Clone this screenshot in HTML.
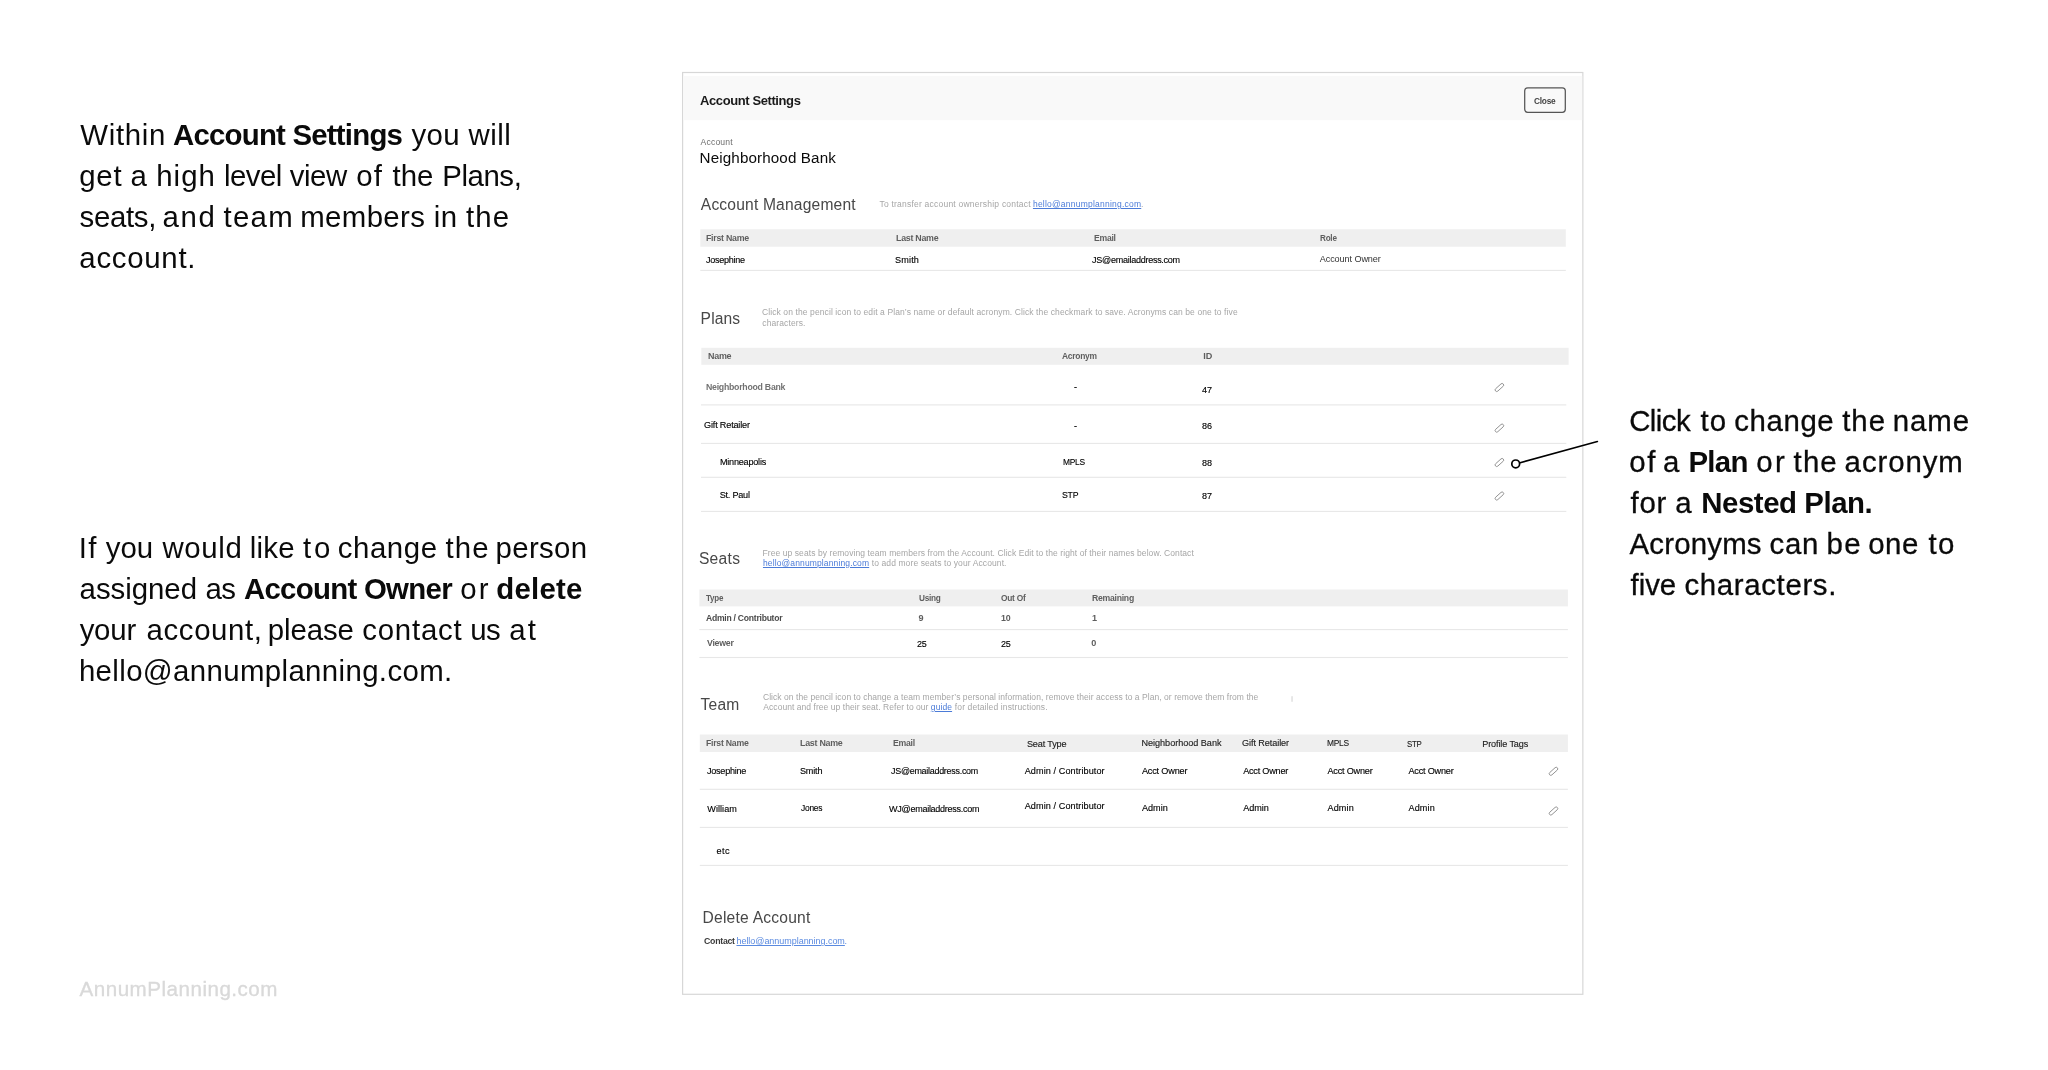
<!DOCTYPE html>
<html lang="en"><head><meta charset="utf-8">
<title>Account Settings</title>
<style>
html,body{margin:0;padding:0;background:#fff;}
body{width:2048px;height:1070px;position:relative;overflow:hidden;font-family:"Liberation Sans", sans-serif;}
.t{position:absolute;white-space:nowrap;line-height:1;transform-origin:0 50%;}
.t b{font-weight:700;}
.t a{color:#4b7bd8;text-decoration:underline;}
.t a.l2{color:#5a8ae0;}
svg{position:absolute;left:0;top:0;overflow:visible;}
#root{position:absolute;left:0;top:0;width:2048px;height:1070px;will-change:transform;}

</style></head><body><div id="root">
<svg width="2048" height="1070" viewBox="0 0 2048 1070"><rect x="682.6" y="72.5" width="900.25" height="921.8" fill="#fff" stroke="#d7d7d7" stroke-width="1.2"/><rect x="683.2" y="76" width="899" height="44.2" fill="#f9f9f9"/><rect x="1524.7" y="87.85" width="40.6" height="24.45" rx="3" ry="3" fill="none" stroke="#555" stroke-width="1.25"/><rect x="700.3" y="229.25" width="865.50" height="17.50" fill="#efefef"/><rect x="701.3" y="347.8" width="867.30" height="17.00" fill="#efefef"/><rect x="699.4" y="589.5" width="868.50" height="16.90" fill="#efefef"/><rect x="699.8" y="734.5" width="868.10" height="17.50" fill="#efefef"/><rect x="700.3" y="269.85" width="865.50" height="1.1" fill="#e7e7e7"/><rect x="701.0" y="404.35" width="865.30" height="1.1" fill="#e7e7e7"/><rect x="701.0" y="442.85" width="865.30" height="1.1" fill="#e7e7e7"/><rect x="701.0" y="476.75" width="865.30" height="1.1" fill="#e7e7e7"/><rect x="701.0" y="510.85" width="865.30" height="1.1" fill="#e7e7e7"/><rect x="699.4" y="629.05" width="868.50" height="1.1" fill="#e7e7e7"/><rect x="699.4" y="656.95" width="868.50" height="1.1" fill="#e7e7e7"/><rect x="699.8" y="788.75" width="868.10" height="1.1" fill="#e7e7e7"/><rect x="699.8" y="826.85" width="868.10" height="1.1" fill="#e7e7e7"/><rect x="699.8" y="864.85" width="868.10" height="1.1" fill="#e7e7e7"/><rect x="1494.20" y="385.90" width="10.4" height="3.2" rx="1.6" ry="1.6" fill="none" stroke="#8e8e8e" stroke-width="0.9" transform="rotate(-42 1499.40 387.50)"/><rect x="1494.20" y="426.50" width="10.4" height="3.2" rx="1.6" ry="1.6" fill="none" stroke="#8e8e8e" stroke-width="0.9" transform="rotate(-42 1499.40 428.10)"/><rect x="1494.20" y="460.90" width="10.4" height="3.2" rx="1.6" ry="1.6" fill="none" stroke="#8e8e8e" stroke-width="0.9" transform="rotate(-42 1499.40 462.50)"/><rect x="1494.20" y="494.40" width="10.4" height="3.2" rx="1.6" ry="1.6" fill="none" stroke="#8e8e8e" stroke-width="0.9" transform="rotate(-42 1499.40 496.00)"/><rect x="1548.30" y="769.70" width="10.4" height="3.2" rx="1.6" ry="1.6" fill="none" stroke="#8e8e8e" stroke-width="0.9" transform="rotate(-42 1553.50 771.30)"/><rect x="1548.30" y="809.40" width="10.4" height="3.2" rx="1.6" ry="1.6" fill="none" stroke="#8e8e8e" stroke-width="0.9" transform="rotate(-42 1553.50 811.00)"/><line x1="1519.2" y1="463.0" x2="1597.4" y2="441.5" stroke="#000" stroke-width="1.6" stroke-linecap="round"/><circle cx="1515.7" cy="463.9" r="3.9" fill="#fff" stroke="#000" stroke-width="1.7"/><rect x="1291.2" y="696" width="1.7" height="6" rx="0.8" fill="#e4e4e4"/></svg>
<div class="t" id="t0" style="left:80.23px;top:120px;font-size:29.4px;color:#0a0a0a;letter-spacing:0.701px;">Within</div>
<div class="t" id="t1" style="left:172.98px;top:120px;font-size:29.4px;color:#0a0a0a;font-weight:700;letter-spacing:-0.782px;">Account Settings</div>
<div class="t" id="t2" style="left:411.42px;top:120px;font-size:29.4px;color:#0a0a0a;letter-spacing:0.412px;">you will</div>
<div class="t" id="t3" style="left:79.34px;top:161px;font-size:29.4px;color:#0a0a0a;letter-spacing:0.693px;">get</div>
<div class="t" id="t4" style="left:130.49px;top:161px;font-size:29.4px;color:#0a0a0a;">a</div>
<div class="t" id="t5" style="left:156.24px;top:161px;font-size:29.4px;color:#0a0a0a;letter-spacing:1.031px;">high</div>
<div class="t" id="t6" style="left:223.89px;top:161px;font-size:29.4px;color:#0a0a0a;letter-spacing:-0.509px;">level</div>
<div class="t" id="t7" style="left:289.77px;top:161px;font-size:29.4px;color:#0a0a0a;letter-spacing:-0.455px;">view</div>
<div class="t" id="t8" style="left:356.34px;top:161px;font-size:29.4px;color:#0a0a0a;letter-spacing:1.107px;">of</div>
<div class="t" id="t9" style="left:392.57px;top:161px;font-size:29.4px;color:#0a0a0a;letter-spacing:-0.045px;">the</div>
<div class="t" id="t10" style="left:442.31px;top:161px;font-size:29.4px;color:#0a0a0a;letter-spacing:-0.438px;">Plans,</div>
<div class="t" id="t11" style="left:79.62px;top:202px;font-size:29.4px;color:#0a0a0a;letter-spacing:-0.337px;">seats,</div>
<div class="t" id="t12" style="left:162.52px;top:202px;font-size:29.4px;color:#0a0a0a;letter-spacing:1.596px;">and</div>
<div class="t" id="t13" style="left:223.52px;top:202px;font-size:29.4px;color:#0a0a0a;letter-spacing:1.251px;">team</div>
<div class="t" id="t14" style="left:300.24px;top:202px;font-size:29.4px;color:#0a0a0a;letter-spacing:0.370px;">members</div>
<div class="t" id="t15" style="left:433.79px;top:202px;font-size:29.4px;color:#0a0a0a;letter-spacing:0.555px;">in</div>
<div class="t" id="t16" style="left:466.06px;top:202px;font-size:29.4px;color:#0a0a0a;letter-spacing:1.056px;">the</div>
<div class="t" id="t17" style="left:79.34px;top:243px;font-size:29.4px;color:#0a0a0a;letter-spacing:0.718px;">account.</div>
<div class="t" id="t18" style="left:78.69px;top:533px;font-size:29.4px;color:#0a0a0a;letter-spacing:1.356px;">If</div>
<div class="t" id="t19" style="left:105.70px;top:533px;font-size:29.4px;color:#0a0a0a;letter-spacing:0.070px;">you</div>
<div class="t" id="t20" style="left:162.45px;top:533px;font-size:29.4px;color:#0a0a0a;letter-spacing:0.649px;">would</div>
<div class="t" id="t21" style="left:249.78px;top:533px;font-size:29.4px;color:#0a0a0a;letter-spacing:0.252px;">like</div>
<div class="t" id="t22" style="left:303.04px;top:533px;font-size:29.4px;color:#0a0a0a;letter-spacing:2.753px;">to</div>
<div class="t" id="t23" style="left:337.65px;top:533px;font-size:29.4px;color:#0a0a0a;letter-spacing:0.608px;">change</div>
<div class="t" id="t24" style="left:445.58px;top:533px;font-size:29.4px;color:#0a0a0a;letter-spacing:1.125px;">the</div>
<div class="t" id="t25" style="left:495.51px;top:533px;font-size:29.4px;color:#0a0a0a;letter-spacing:0.362px;">person</div>
<div class="t" id="t26" style="left:79.59px;top:574px;font-size:29.4px;color:#0a0a0a;letter-spacing:-0.036px;">assigned</div>
<div class="t" id="t27" style="left:205.59px;top:574px;font-size:29.4px;color:#0a0a0a;letter-spacing:-0.780px;">as</div>
<div class="t" id="t28" style="left:243.89px;top:574px;font-size:29.4px;color:#0a0a0a;font-weight:700;letter-spacing:-0.705px;">Account Owner</div>
<div class="t" id="t29" style="left:460.34px;top:574px;font-size:29.4px;color:#0a0a0a;letter-spacing:2.044px;">or</div>
<div class="t" id="t30" style="left:496.35px;top:574px;font-size:29.4px;color:#0a0a0a;font-weight:700;letter-spacing:0.214px;">delete</div>
<div class="t" id="t31" style="left:79.64px;top:615px;font-size:29.4px;color:#0a0a0a;letter-spacing:-0.196px;">your</div>
<div class="t" id="t32" style="left:146.61px;top:615px;font-size:29.4px;color:#0a0a0a;letter-spacing:0.598px;">account,</div>
<div class="t" id="t33" style="left:267.83px;top:615px;font-size:29.4px;color:#0a0a0a;letter-spacing:-0.108px;">please</div>
<div class="t" id="t34" style="left:362.34px;top:615px;font-size:29.4px;color:#0a0a0a;letter-spacing:0.749px;">contact</div>
<div class="t" id="t35" style="left:470.21px;top:615px;font-size:29.4px;color:#0a0a0a;letter-spacing:-0.603px;">us</div>
<div class="t" id="t36" style="left:509.13px;top:615px;font-size:29.4px;color:#0a0a0a;letter-spacing:2.241px;">at</div>
<div class="t" id="t37" style="left:78.91px;top:656px;font-size:29.4px;color:#0a0a0a;letter-spacing:0.370px;">hello@annumplanning.com.</div>
<div class="t" id="t38" style="left:1629.16px;top:406px;font-size:29.4px;color:#0a0a0a;-webkit-text-stroke:0.3px #0a0a0a;letter-spacing:-0.544px;">Click</div>
<div class="t" id="t39" style="left:1700.57px;top:406px;font-size:29.4px;color:#0a0a0a;-webkit-text-stroke:0.3px #0a0a0a;letter-spacing:0.976px;">to</div>
<div class="t" id="t40" style="left:1734.30px;top:406px;font-size:29.4px;color:#0a0a0a;-webkit-text-stroke:0.3px #0a0a0a;letter-spacing:0.589px;">change</div>
<div class="t" id="t41" style="left:1842.15px;top:406px;font-size:29.4px;color:#0a0a0a;-webkit-text-stroke:0.3px #0a0a0a;letter-spacing:0.999px;">the</div>
<div class="t" id="t42" style="left:1892.72px;top:406px;font-size:29.4px;color:#0a0a0a;-webkit-text-stroke:0.3px #0a0a0a;letter-spacing:0.969px;">name</div>
<div class="t" id="t43" style="left:1629.16px;top:447px;font-size:29.4px;color:#0a0a0a;-webkit-text-stroke:0.3px #0a0a0a;letter-spacing:1.749px;">of</div>
<div class="t" id="t44" style="left:1662.94px;top:447px;font-size:29.4px;color:#0a0a0a;-webkit-text-stroke:0.3px #0a0a0a;">a</div>
<div class="t" id="t45" style="left:1688.45px;top:447px;font-size:29.4px;color:#0a0a0a;font-weight:700;letter-spacing:-0.708px;">Plan</div>
<div class="t" id="t46" style="left:1756.30px;top:447px;font-size:29.4px;color:#0a0a0a;-webkit-text-stroke:0.3px #0a0a0a;letter-spacing:2.468px;">or</div>
<div class="t" id="t47" style="left:1793.62px;top:447px;font-size:29.4px;color:#0a0a0a;-webkit-text-stroke:0.3px #0a0a0a;letter-spacing:1.121px;">the</div>
<div class="t" id="t48" style="left:1844.61px;top:447px;font-size:29.4px;color:#0a0a0a;-webkit-text-stroke:0.3px #0a0a0a;letter-spacing:0.925px;">acronym</div>
<div class="t" id="t49" style="left:1630.58px;top:488px;font-size:29.4px;color:#0a0a0a;-webkit-text-stroke:0.3px #0a0a0a;letter-spacing:0.763px;">for</div>
<div class="t" id="t50" style="left:1675.24px;top:488px;font-size:29.4px;color:#0a0a0a;-webkit-text-stroke:0.3px #0a0a0a;">a</div>
<div class="t" id="t51" style="left:1701.23px;top:488px;font-size:29.4px;color:#0a0a0a;font-weight:700;letter-spacing:-0.446px;">Nested Plan.</div>
<div class="t" id="t52" style="left:1629.55px;top:529px;font-size:29.4px;color:#0a0a0a;-webkit-text-stroke:0.3px #0a0a0a;letter-spacing:0.194px;">Acronyms</div>
<div class="t" id="t53" style="left:1769.61px;top:529px;font-size:29.4px;color:#0a0a0a;-webkit-text-stroke:0.3px #0a0a0a;letter-spacing:0.643px;">can</div>
<div class="t" id="t54" style="left:1826.50px;top:529px;font-size:29.4px;color:#0a0a0a;-webkit-text-stroke:0.3px #0a0a0a;letter-spacing:1.411px;">be</div>
<div class="t" id="t55" style="left:1868.26px;top:529px;font-size:29.4px;color:#0a0a0a;-webkit-text-stroke:0.3px #0a0a0a;letter-spacing:0.527px;">one</div>
<div class="t" id="t56" style="left:1928.57px;top:529px;font-size:29.4px;color:#0a0a0a;-webkit-text-stroke:0.3px #0a0a0a;letter-spacing:1.244px;">to</div>
<div class="t" id="t57" style="left:1630.58px;top:570px;font-size:29.4px;color:#0a0a0a;-webkit-text-stroke:0.3px #0a0a0a;letter-spacing:-0.033px;">five</div>
<div class="t" id="t58" style="left:1684.47px;top:570px;font-size:29.4px;color:#0a0a0a;-webkit-text-stroke:0.3px #0a0a0a;letter-spacing:0.651px;">characters.</div>
<div class="t" id="t59" style="left:79.56px;top:979px;font-size:20.6px;color:#d9d9d9;-webkit-text-stroke:0.35px #d9d9d9;letter-spacing:0.493px;">AnnumPlanning.com</div>
<div class="t" id="t60" style="left:700.27px;top:94px;font-size:13.2px;color:#1a1a1a;font-weight:700;letter-spacing:-0.396px;transform:scaleX(0.9839);">Account Settings</div>
<div class="t" id="t61" style="left:1534.38px;top:97px;font-size:9.0px;color:#444;font-weight:700;letter-spacing:-0.270px;transform:scaleX(0.9253);">Close</div>
<div class="t" id="t62" style="left:700.51px;top:138px;font-size:8.6px;color:#6e6e6e;letter-spacing:0.191px;">Account</div>
<div class="t" id="t63" style="left:699.58px;top:150px;font-size:15.2px;color:#0a0a0a;letter-spacing:0.125px;">Neighborhood Bank</div>
<div class="t" id="t64" style="left:700.81px;top:197px;font-size:15.6px;color:#484848;letter-spacing:0.184px;">Account Management</div>
<div class="t" id="t65" style="left:879.41px;top:200px;font-size:8.5px;color:#a6a6a6;letter-spacing:0.224px;">To transfer account ownership contact</div>
<div class="t" id="t66" style="left:1032.94px;top:200px;font-size:8.5px;color:#a6a6a6;letter-spacing:0.224px;"><a>hello@annumplanning.com</a></div>
<div class="t" id="t67" style="left:1141.00px;top:200px;font-size:8.5px;color:#a6a6a6;">.</div>
<div class="t" id="t68" style="left:706.41px;top:234px;font-size:9.1px;color:#5e5e5e;font-weight:700;letter-spacing:-0.273px;transform:scaleX(0.9683);">First Name</div>
<div class="t" id="t69" style="left:896.05px;top:234px;font-size:9.1px;color:#5e5e5e;font-weight:700;letter-spacing:-0.273px;transform:scaleX(0.9729);">Last Name</div>
<div class="t" id="t70" style="left:1093.55px;top:234px;font-size:9.1px;color:#5e5e5e;font-weight:700;letter-spacing:-0.273px;transform:scaleX(0.9493);">Email</div>
<div class="t" id="t71" style="left:1319.59px;top:234px;font-size:9.1px;color:#5e5e5e;font-weight:700;letter-spacing:-0.273px;transform:scaleX(0.8952);">Role</div>
<div class="t" id="t72" style="left:706.41px;top:256px;font-size:9.1px;color:#000;-webkit-text-stroke:0.13px #000;letter-spacing:-0.273px;transform:scaleX(0.9948);">Josephine</div>
<div class="t" id="t73" style="left:895.08px;top:256px;font-size:9.1px;color:#000;-webkit-text-stroke:0.13px #000;letter-spacing:0.152px;">Smith</div>
<div class="t" id="t74" style="left:1091.59px;top:256px;font-size:9.1px;color:#000;-webkit-text-stroke:0.13px #000;letter-spacing:-0.273px;transform:scaleX(0.9934);">JS@emailaddress.com</div>
<div class="t" id="t75" style="left:1319.73px;top:255px;font-size:9.1px;color:#333;letter-spacing:-0.088px;">Account Owner</div>
<div class="t" id="t76" style="left:700.60px;top:311px;font-size:15.6px;color:#484848;letter-spacing:0.141px;">Plans</div>
<div class="t" id="t77" style="left:761.97px;top:308px;font-size:8.5px;color:#a6a6a6;letter-spacing:0.101px;">Click on the pencil icon to edit a Plan’s name or default acronym. Click the checkmark to save. Acronyms can be one to five</div>
<div class="t" id="t78" style="left:762.34px;top:319px;font-size:8.5px;color:#a6a6a6;letter-spacing:0.103px;">characters.</div>
<div class="t" id="t79" style="left:707.55px;top:352px;font-size:9.1px;color:#5e5e5e;font-weight:700;letter-spacing:-0.273px;transform:scaleX(0.9853);">Name</div>
<div class="t" id="t80" style="left:1062.41px;top:352px;font-size:9.1px;color:#5e5e5e;font-weight:700;letter-spacing:-0.273px;transform:scaleX(0.9283);">Acronym</div>
<div class="t" id="t81" style="left:1203.26px;top:352px;font-size:9.1px;color:#5e5e5e;font-weight:700;letter-spacing:-0.057px;">ID</div>
<div class="t" id="t82" style="left:706.23px;top:383px;font-size:9.1px;color:#727272;font-weight:700;letter-spacing:-0.273px;transform:scaleX(0.9631);">Neighborhood Bank</div>
<div class="t" id="t83" style="left:1074.02px;top:383px;font-size:9.1px;color:#000;-webkit-text-stroke:0.13px #000;">-</div>
<div class="t" id="t84" style="left:1201.59px;top:386px;font-size:9.1px;color:#000;-webkit-text-stroke:0.13px #000;letter-spacing:-0.087px;transform:scaleX(0.9960);">47</div>
<div class="t" id="t85" style="left:704.11px;top:421px;font-size:9.1px;color:#000;-webkit-text-stroke:0.13px #000;letter-spacing:-0.183px;">Gift Retailer</div>
<div class="t" id="t86" style="left:1074.02px;top:422px;font-size:9.1px;color:#000;-webkit-text-stroke:0.13px #000;">-</div>
<div class="t" id="t87" style="left:1201.76px;top:422px;font-size:9.1px;color:#000;-webkit-text-stroke:0.13px #000;letter-spacing:-0.094px;transform:scaleX(0.9949);">86</div>
<div class="t" id="t88" style="left:719.95px;top:458px;font-size:9.1px;color:#000;-webkit-text-stroke:0.13px #000;letter-spacing:-0.221px;">Minneapolis</div>
<div class="t" id="t89" style="left:1063.40px;top:458px;font-size:9.1px;color:#000;-webkit-text-stroke:0.13px #000;letter-spacing:-0.273px;transform:scaleX(0.9236);">MPLS</div>
<div class="t" id="t90" style="left:1201.76px;top:459px;font-size:9.1px;color:#000;-webkit-text-stroke:0.13px #000;letter-spacing:-0.094px;transform:scaleX(0.9949);">88</div>
<div class="t" id="t91" style="left:719.64px;top:491px;font-size:9.1px;color:#000;-webkit-text-stroke:0.13px #000;letter-spacing:-0.212px;">St. Paul</div>
<div class="t" id="t92" style="left:1062.42px;top:491px;font-size:9.1px;color:#000;-webkit-text-stroke:0.13px #000;letter-spacing:-0.273px;transform:scaleX(0.9595);">STP</div>
<div class="t" id="t93" style="left:1201.76px;top:492px;font-size:9.1px;color:#000;-webkit-text-stroke:0.13px #000;letter-spacing:-0.123px;transform:scaleX(0.9947);">87</div>
<div class="t" id="t94" style="left:698.92px;top:551px;font-size:15.6px;color:#484848;letter-spacing:0.290px;">Seats</div>
<div class="t" id="t95" style="left:762.49px;top:549px;font-size:8.5px;color:#a6a6a6;letter-spacing:0.078px;">Free up seats by removing team members from the Account. Click Edit to the right of their names below. Contact</div>
<div class="t" id="t96" style="left:762.96px;top:559px;font-size:8.5px;color:#a6a6a6;letter-spacing:0.133px;"><a>hello@annumplanning.com</a></div>
<div class="t" id="t97" style="left:871.71px;top:559px;font-size:8.5px;color:#a6a6a6;letter-spacing:0.104px;">to add more seats to your Account.</div>
<div class="t" id="t98" style="left:706.05px;top:594px;font-size:9.1px;color:#5e5e5e;font-weight:700;letter-spacing:-0.273px;transform:scaleX(0.8788);">Type</div>
<div class="t" id="t99" style="left:918.87px;top:594px;font-size:9.1px;color:#5e5e5e;font-weight:700;letter-spacing:-0.273px;transform:scaleX(0.9065);">Using</div>
<div class="t" id="t100" style="left:1001.23px;top:594px;font-size:9.1px;color:#5e5e5e;font-weight:700;letter-spacing:-0.273px;transform:scaleX(0.9197);">Out Of</div>
<div class="t" id="t101" style="left:1091.73px;top:594px;font-size:9.1px;color:#5e5e5e;font-weight:700;letter-spacing:-0.273px;transform:scaleX(0.9521);">Remaining</div>
<div class="t" id="t102" style="left:705.73px;top:614px;font-size:9.1px;color:#4a4a4a;font-weight:700;letter-spacing:-0.273px;transform:scaleX(0.9458);">Admin / Contributor</div>
<div class="t" id="t103" style="left:918.42px;top:614px;font-size:9.1px;color:#5e5e5e;font-weight:700;">9</div>
<div class="t" id="t104" style="left:1001.23px;top:614px;font-size:9.1px;color:#5e5e5e;font-weight:700;letter-spacing:-0.273px;transform:scaleX(0.9695);">10</div>
<div class="t" id="t105" style="left:1092.07px;top:614px;font-size:9.1px;color:#5e5e5e;font-weight:700;">1</div>
<div class="t" id="t106" style="left:706.72px;top:639px;font-size:9.1px;color:#5e5e5e;font-weight:700;letter-spacing:-0.273px;transform:scaleX(0.9651);">Viewer</div>
<div class="t" id="t107" style="left:917.42px;top:640px;font-size:9.1px;color:#000;-webkit-text-stroke:0.13px #000;letter-spacing:-0.271px;transform:scaleX(0.9890);">25</div>
<div class="t" id="t108" style="left:1000.90px;top:640px;font-size:9.1px;color:#000;-webkit-text-stroke:0.13px #000;letter-spacing:-0.208px;transform:scaleX(0.9924);">25</div>
<div class="t" id="t109" style="left:1091.35px;top:639px;font-size:9.1px;color:#5e5e5e;font-weight:700;">0</div>
<div class="t" id="t110" style="left:700.49px;top:697px;font-size:15.6px;color:#484848;letter-spacing:0.235px;">Team</div>
<div class="t" id="t111" style="left:762.97px;top:693px;font-size:8.5px;color:#a6a6a6;letter-spacing:0.053px;">Click on the pencil icon to change a team member’s personal information, remove their access to a Plan, or remove them from the</div>
<div class="t" id="t112" style="left:763.34px;top:703px;font-size:8.5px;color:#a6a6a6;letter-spacing:0.049px;">Account and free up their seat. Refer to our</div>
<div class="t" id="t113" style="left:930.83px;top:703px;font-size:8.5px;color:#a6a6a6;letter-spacing:0.088px;"><a>guide</a></div>
<div class="t" id="t114" style="left:954.82px;top:703px;font-size:8.5px;color:#a6a6a6;letter-spacing:0.120px;">for detailed instructions.</div>
<div class="t" id="t115" style="left:706.23px;top:739px;font-size:9.1px;color:#5e5e5e;font-weight:700;letter-spacing:-0.273px;transform:scaleX(0.9603);">First Name</div>
<div class="t" id="t116" style="left:800.05px;top:739px;font-size:9.1px;color:#5e5e5e;font-weight:700;letter-spacing:-0.273px;transform:scaleX(0.9770);">Last Name</div>
<div class="t" id="t117" style="left:893.05px;top:739px;font-size:9.1px;color:#5e5e5e;font-weight:700;letter-spacing:-0.273px;transform:scaleX(0.9563);">Email</div>
<div class="t" id="t118" style="left:1026.88px;top:740px;font-size:9.1px;color:#1c1c1c;-webkit-text-stroke:0.13px #1c1c1c;letter-spacing:-0.137px;">Seat Type</div>
<div class="t" id="t119" style="left:1141.45px;top:739px;font-size:9.1px;color:#1c1c1c;-webkit-text-stroke:0.13px #1c1c1c;letter-spacing:-0.021px;">Neighborhood Bank</div>
<div class="t" id="t120" style="left:1242.12px;top:739px;font-size:9.1px;color:#1c1c1c;-webkit-text-stroke:0.13px #1c1c1c;letter-spacing:-0.086px;">Gift Retailer</div>
<div class="t" id="t121" style="left:1327.08px;top:739px;font-size:9.1px;color:#1c1c1c;-webkit-text-stroke:0.13px #1c1c1c;letter-spacing:-0.273px;transform:scaleX(0.9236);">MPLS</div>
<div class="t" id="t122" style="left:1406.73px;top:740px;font-size:9.1px;color:#1c1c1c;-webkit-text-stroke:0.13px #1c1c1c;letter-spacing:-0.273px;transform:scaleX(0.8631);">STP</div>
<div class="t" id="t123" style="left:1482.28px;top:740px;font-size:9.1px;color:#1c1c1c;-webkit-text-stroke:0.13px #1c1c1c;letter-spacing:-0.122px;">Profile Tags</div>
<div class="t" id="t124" style="left:707.24px;top:767px;font-size:9.1px;color:#000;-webkit-text-stroke:0.13px #000;letter-spacing:-0.260px;transform:scaleX(0.9977);">Josephine</div>
<div class="t" id="t125" style="left:799.93px;top:767px;font-size:9.1px;color:#000;-webkit-text-stroke:0.13px #000;letter-spacing:-0.165px;">Smith</div>
<div class="t" id="t126" style="left:890.73px;top:767px;font-size:9.1px;color:#000;-webkit-text-stroke:0.13px #000;letter-spacing:-0.273px;transform:scaleX(0.9836);">JS@emailaddress.com</div>
<div class="t" id="t127" style="left:1024.73px;top:767px;font-size:9.1px;color:#000;-webkit-text-stroke:0.13px #000;letter-spacing:0.087px;">Admin / Contributor</div>
<div class="t" id="t128" style="left:1141.91px;top:767px;font-size:9.1px;color:#000;-webkit-text-stroke:0.13px #000;letter-spacing:-0.159px;">Acct Owner</div>
<div class="t" id="t129" style="left:1243.14px;top:767px;font-size:9.1px;color:#000;-webkit-text-stroke:0.13px #000;letter-spacing:-0.206px;">Acct Owner</div>
<div class="t" id="t130" style="left:1327.47px;top:767px;font-size:9.1px;color:#000;-webkit-text-stroke:0.13px #000;letter-spacing:-0.194px;">Acct Owner</div>
<div class="t" id="t131" style="left:1408.47px;top:767px;font-size:9.1px;color:#000;-webkit-text-stroke:0.13px #000;letter-spacing:-0.194px;">Acct Owner</div>
<div class="t" id="t132" style="left:707.30px;top:805px;font-size:9.1px;color:#000;-webkit-text-stroke:0.13px #000;letter-spacing:0.041px;">William</div>
<div class="t" id="t133" style="left:801.05px;top:804px;font-size:9.1px;color:#000;-webkit-text-stroke:0.13px #000;letter-spacing:-0.273px;transform:scaleX(0.9264);">Jones</div>
<div class="t" id="t134" style="left:888.59px;top:805px;font-size:9.1px;color:#000;-webkit-text-stroke:0.13px #000;letter-spacing:-0.273px;transform:scaleX(0.9929);">WJ@emailaddress.com</div>
<div class="t" id="t135" style="left:1024.73px;top:802px;font-size:9.1px;color:#000;-webkit-text-stroke:0.13px #000;letter-spacing:0.087px;">Admin / Contributor</div>
<div class="t" id="t136" style="left:1141.91px;top:804px;font-size:9.1px;color:#000;-webkit-text-stroke:0.13px #000;letter-spacing:0.020px;">Admin</div>
<div class="t" id="t137" style="left:1243.14px;top:804px;font-size:9.1px;color:#000;-webkit-text-stroke:0.13px #000;letter-spacing:-0.017px;">Admin</div>
<div class="t" id="t138" style="left:1327.47px;top:804px;font-size:9.1px;color:#000;-webkit-text-stroke:0.13px #000;letter-spacing:0.139px;">Admin</div>
<div class="t" id="t139" style="left:1408.47px;top:804px;font-size:9.1px;color:#000;-webkit-text-stroke:0.13px #000;letter-spacing:0.139px;">Admin</div>
<div class="t" id="t140" style="left:716.59px;top:847px;font-size:9.1px;color:#000;-webkit-text-stroke:0.13px #000;letter-spacing:0.374px;">etc</div>
<div class="t" id="t141" style="left:702.54px;top:910px;font-size:15.6px;color:#484848;letter-spacing:0.223px;">Delete Account</div>
<div class="t" id="t142" style="left:703.56px;top:937px;font-size:9.0px;color:#3a3a3a;font-weight:700;letter-spacing:-0.270px;transform:scaleX(0.9727);">Contact</div>
<div class="t" id="t143" style="left:736.46px;top:937px;font-size:9.0px;color:#5a8ae0;letter-spacing:-0.036px;"><a class="l2">hello@annumplanning.com</a></div>
<div class="t" id="t144" style="left:844.51px;top:937px;font-size:9.0px;color:#5a8ae0;">.</div>
</div></body></html>
